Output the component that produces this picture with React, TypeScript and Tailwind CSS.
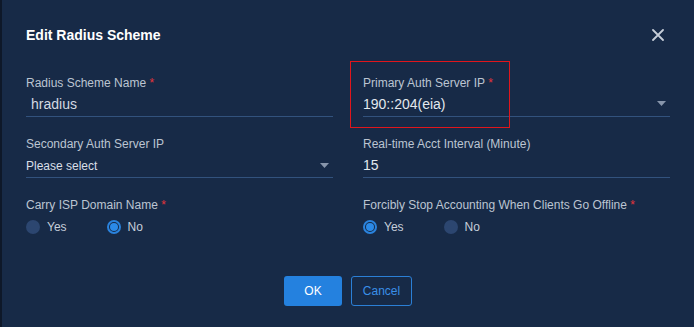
import React, { useState } from "react";

const Caret = () => (
  <svg width="9" height="5" viewBox="0 0 9 5" className="shrink-0">
    <path d="M0 0 L9 0 L4.5 5 Z" fill="#8795ab" />
  </svg>
);

const Label = ({ text, required }: { text: string; required?: boolean }) => (
  <div className="h-4 text-[12px] leading-4 text-[#bcc5d2] whitespace-nowrap">
    {text}
    {required && <span className="text-[#e5343a]"> *</span>}
  </div>
);

const Radio = ({ checked, label, onClick }: { checked: boolean; label: string; onClick: () => void }) => (
  <button type="button" onClick={onClick} className="flex items-center gap-[7px] cursor-pointer">
    {checked ? (
      <span className="w-[14px] h-[14px] rounded-full border-2 border-[#2a83de] flex items-center justify-center">
        <span className="w-[8px] h-[8px] rounded-full bg-[#2b8ae8]" />
      </span>
    ) : (
      <span className="w-[14px] h-[14px] rounded-full bg-[#2c4670]" />
    )}
    <span className="text-[12px] leading-4 text-[#c6ceda]">{label}</span>
  </button>
);

const EditRadiusScheme = () => {
  const [carryIsp, setCarryIsp] = useState(false);
  const [forceStop, setForceStop] = useState(true);
  const [name, setName] = useState("hradius");
  const [interval, setInterval] = useState("15");

  return (
    <div className="w-[694px] h-[327px] bg-[#0e1829] flex" style={{ fontFamily: '"Liberation Sans", Arial, sans-serif' }}>
      <div className="relative ml-[2px] flex-1 bg-[#172a47] flex flex-col pt-[25px] pl-6 pr-6 pb-[21px]">
        {/* header */}
        <div className="flex items-center justify-between h-5 pr-[6px]">
          <div className="text-[14px] leading-5 font-bold text-white">Edit Radius Scheme</div>
          <svg width="12" height="12" viewBox="0 0 12 12">
            <path d="M1 1 L11 11 M11 1 L1 11" stroke="#c6cdd8" strokeWidth="1.8" strokeLinecap="round" />
          </svg>
        </div>

        {/* form */}
        <div className="mt-[30px] grid grid-cols-2 gap-x-[30px] gap-y-[19px]">
          <div className="flex flex-col">
            <Label text="Radius Scheme Name" required />
            <input
              value={name}
              onChange={(e) => setName(e.target.value)}
              className="mt-[3px] h-[23px] pb-[3px] pl-[5px] text-[14px] leading-5 text-[#d3d9e2] bg-transparent outline-none border-b border-[#32527d]"
            />
          </div>
          <div className="flex flex-col">
            <Label text="Primary Auth Server IP" required />
            <div className="mt-[3px] h-[23px] pb-[3px] flex items-center justify-between pr-[4px] border-b border-[#32527d]">
              <span className="text-[14px] leading-5 text-[#e3e8ee]">190::204(eia)</span>
              <Caret />
            </div>
          </div>

          <div className="flex flex-col">
            <Label text="Secondary Auth Server IP" />
            <div className="mt-[3px] h-[23px] pb-[1px] flex items-center justify-between pr-[4px] border-b border-[#32527d]">
              <span className="text-[12px] leading-5 text-[#d9dfe7]">Please select</span>
              <Caret />
            </div>
          </div>
          <div className="flex flex-col">
            <Label text="Real-time Acct Interval (Minute)" />
            <input
              value={interval}
              onChange={(e) => setInterval(e.target.value)}
              className="mt-[3px] h-[23px] pb-[3px] text-[14px] leading-5 text-[#e3e8ee] bg-transparent outline-none border-b border-[#32527d]"
            />
          </div>

          <div className="flex flex-col">
            <Label text="Carry ISP Domain Name" required />
            <div className="mt-[6px] flex items-center gap-[40px]">
              <Radio checked={carryIsp} label="Yes" onClick={() => setCarryIsp(true)} />
              <Radio checked={!carryIsp} label="No" onClick={() => setCarryIsp(false)} />
            </div>
          </div>
          <div className="flex flex-col">
            <Label text="Forcibly Stop Accounting When Clients Go Offline" required />
            <div className="mt-[6px] flex items-center gap-[40px]">
              <Radio checked={forceStop} label="Yes" onClick={() => setForceStop(true)} />
              <Radio checked={!forceStop} label="No" onClick={() => setForceStop(false)} />
            </div>
          </div>
        </div>

        {/* footer */}
        <div className="mt-auto flex justify-center gap-[9px]">
          <button className="w-[58px] h-[30px] rounded-[3px] bg-[#2481df] text-[12px] text-white">OK</button>
          <button className="w-[61px] h-[30px] rounded-[3px] border border-[#2b7fd6] text-[12px] text-[#3a8fe8]">
            Cancel
          </button>
        </div>

        {/* highlight box */}
        <div className="absolute left-[348px] top-[61px] w-[160px] h-[67px] border border-[#e0161c] pointer-events-none" />
      </div>
    </div>
  );
};

export default function App() {
  return <EditRadiusScheme />;
}
